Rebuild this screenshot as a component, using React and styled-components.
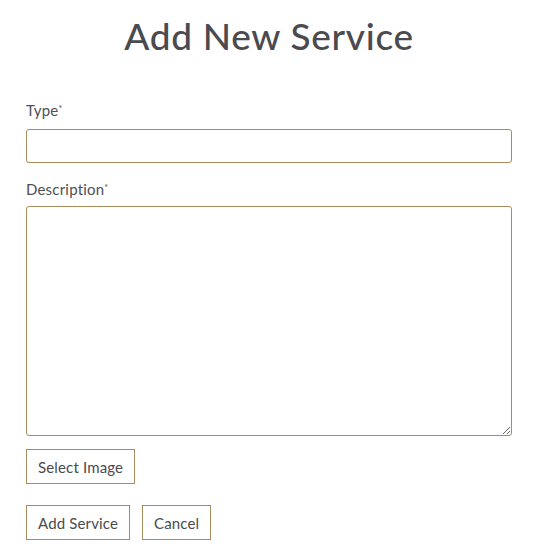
import React from "react";
import styled, { createGlobalStyle } from "styled-components";

const Global = createGlobalStyle`
  html, body { margin: 0; padding: 0; background: #fff; }
  body { font-family: "Lato", "Liberation Sans", sans-serif; color: #4a4a4f; }
  * { box-sizing: border-box; }
`;

const Page = styled.div`
  width: 486px;
  margin-left: 26px;
  padding-top: 14px;
  display: flex;
  flex-direction: column;
`;

const Title = styled.h1`
  margin: 0;
  font-size: 37px;
  font-weight: 500;
  line-height: 44px;
  text-align: center;
  color: #4a4a4f;
  letter-spacing: 0.7px;
`;

const Form = styled.form`
  display: flex;
  flex-direction: column;
  margin-top: 43px;
`;

const Label = styled.label`
  font-size: 15px;
  line-height: 18px;
  color: #4f4f54;
  margin-bottom: ${(p) => p.$mb}px;
  letter-spacing: 0.2px;
  sup { font-size: 9px; vertical-align: top; position: relative; top: -1px; }
`;

const Input = styled.input`
  width: 486px;
  height: 34px;
  border: 1px solid #a88c5c;
  border-radius: 3px;
  outline: none;
  padding: 4px 8px;
  font: inherit;
  margin-bottom: 17px;
`;

const TextArea = styled.textarea`
  width: 486px;
  height: 230px;
  border: 1px solid #a88c5c;
  border-radius: 3px;
  outline: none;
  padding: 4px 8px;
  font: inherit;
  resize: vertical;
  display: block;
`;

const Button = styled.button`
  height: 35px;
  padding: 0 11px;
  background: #fff;
  border: 1px solid #a88c5c;
  border-radius: 0;
  font-family: "Lato", "Liberation Sans", sans-serif;
  font-size: 15px;
  color: #4a4a4f;
  letter-spacing: 0.15px;
  cursor: pointer;
`;

const Row = styled.div`
  display: flex;
  gap: 12px;
  margin-top: ${(p) => p.$mt}px;
`;

export default function App() {
  return (
    <>
      <Global />
      <Page>
        <Title>Add New Service</Title>
        <Form onSubmit={(e) => e.preventDefault()}>
          <Label $mb={10}>Type<sup>*</sup></Label>
          <Input type="text" />
          <Label $mb={8}>Description<sup>*</sup></Label>
          <TextArea />
          <Row $mt={13}>
            <Button type="button">Select Image</Button>
          </Row>
          <Row $mt={21}>
            <Button type="submit">Add Service</Button>
            <Button type="button">Cancel</Button>
          </Row>
        </Form>
      </Page>
    </>
  );
}
